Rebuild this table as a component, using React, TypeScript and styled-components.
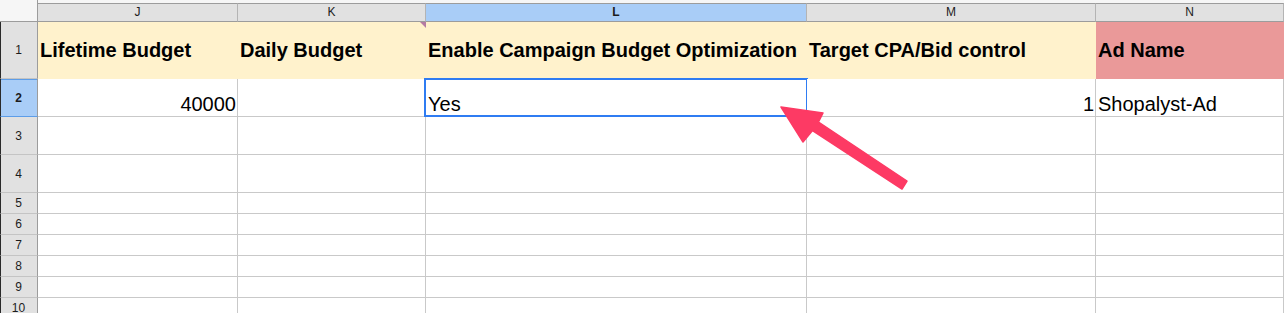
import styled, { createGlobalStyle, css } from "styled-components";

const GlobalStyle = createGlobalStyle`
  html, body {
    margin: 0;
    padding: 0;
    background: #ffffff;
    overflow: hidden;
  }
  body {
    font-family: "Liberation Sans", Arial, sans-serif;
  }
`;

const Page = styled.div`
  position: relative;
  width: 1284px;
  height: 313px;
  overflow: hidden;
`;

const Grid = styled.div`
  display: grid;
  grid-template-columns: 38px 200px 188px 381px 289px 188px;
  grid-template-rows: 22px 57px 38px 38px 38px 21px 21px 21px 21px 21px 21px;
  background: #f6f6f6;
`;

const Corner = styled.div`
  background: #f6f6f6;
  border-bottom: 1px solid #9c9c9c;
  border-right: 1px solid #9c9c9c;
  box-sizing: border-box;
`;

const ColHead = styled.div<{ $active?: boolean }>`
  margin-top: 3px;
  box-sizing: border-box;
  border-top: 1px solid #9c9c9c;
  border-bottom: 1px solid #9c9c9c;
  border-right: 1px solid #b4b4b4;
  background: ${({ $active }) => ($active ? "#a9cdf7" : "#e1e1e1")};
  display: flex;
  align-items: center;
  justify-content: center;
  font-size: 12px;
  color: #1c1c1c;
  font-weight: ${({ $active }) => ($active ? 700 : 400)};
  padding-bottom: 1px;
`;

const RowHead = styled.div<{ $active?: boolean }>`
  box-sizing: border-box;
  border-left: 1px solid #2a2a2a;
  border-right: 1px solid #9c9c9c;
  border-bottom: 1px solid ${({ $active }) => ($active ? "#5d9de8" : "#c4c4c4")};
  ${({ $active }) =>
    $active &&
    css`
      box-shadow: inset 0 1px 0 #5d9de8;
    `}
  background: ${({ $active }) => ($active ? "#a9cdf7" : "#e1e1e1")};
  display: flex;
  align-items: center;
  justify-content: center;
  font-size: 12px;
  color: #1c1c1c;
  font-weight: ${({ $active }) => ($active ? 700 : 400)};
  padding-right: 1px;
`;

const Cell = styled.div<{
  $bg?: string;
  $bold?: boolean;
  $align?: "left" | "right";
  $valign?: "center" | "end";
  $edge?: boolean;
  $note?: boolean;
  $selected?: boolean;
}>`
  position: relative;
  box-sizing: border-box;
  background: ${({ $bg }) => $bg || "#ffffff"};
  border-right: 1px solid ${({ $bg, $edge }) => ($edge ? "#c4c4c4" : $bg ? "transparent" : "#c9c9c9")};
  border-bottom: 1px solid ${({ $bg }) => ($bg ? "transparent" : "#c9c9c9")};
  display: flex;
  align-items: ${({ $valign }) => ($valign === "end" ? "flex-end" : "center")};
  justify-content: ${({ $align }) => ($align === "right" ? "flex-end" : "flex-start")};
  padding: ${({ $valign }) => ($valign === "end" ? "0 1px 0 2px" : "0 2px 0 2px")};
  font-size: 20px;
  line-height: 23px;
  font-weight: ${({ $bold }) => ($bold ? 700 : 400)};
  color: #000000;
  white-space: nowrap;
  overflow: visible;

  ${({ $note }) =>
    $note &&
    css`
      &::after {
        content: "";
        position: absolute;
        top: 0;
        right: -1px;
        width: 0;
        height: 0;
        border-top: 6px solid #b57ca3;
        border-left: 6px solid transparent;
      }
    `}

  ${({ $selected }) =>
    $selected &&
    css`
      &::before {
        content: "";
        position: absolute;
        left: -2px;
        top: -1px;
        right: -2px;
        bottom: -1px;
        border: 2px solid #2f7cf2;
        pointer-events: none;
      }
    `}
`;

const Arrow = styled.svg`
  position: absolute;
  left: 0;
  top: 0;
  pointer-events: none;
`;

const YELLOW = "#fff2cc";
const PINK = "#ea9999";

const columns = ["J", "K", "L", "M", "N"];

type RowSpec = {
  n: number;
  cells: { text?: string; align?: "left" | "right" }[];
};

const blank = () => [{}, {}, {}, {}, {}];

const lowerRows: RowSpec[] = [
  {
    n: 2,
    cells: [
      { text: "40000", align: "right" },
      {},
      { text: "Yes" },
      { text: "1", align: "right" },
      { text: "Shopalyst-Ad" },
    ],
  },
  { n: 3, cells: blank() },
  { n: 4, cells: blank() },
  { n: 5, cells: blank() },
  { n: 6, cells: blank() },
  { n: 7, cells: blank() },
  { n: 8, cells: blank() },
  { n: 9, cells: blank() },
  { n: 10, cells: blank() },
];

const headers = [
  "Lifetime Budget",
  "Daily Budget",
  "Enable Campaign Budget Optimization",
  "Target CPA/Bid control",
  "Ad Name",
];

export default function App() {
  return (
    <Page>
      <GlobalStyle />
      <Grid>
        <Corner />
        {columns.map((c) => (
          <ColHead key={c} $active={c === "L"}>
            {c}
          </ColHead>
        ))}

        <RowHead>1</RowHead>
        {headers.map((h, i) => (
          <Cell key={h} $bold $bg={i === 4 ? PINK : YELLOW} $note={i === 1}>
            {h}
          </Cell>
        ))}

        {lowerRows.map((row) => [
          <RowHead key={`h${row.n}`} $active={row.n === 2}>
            {row.n}
          </RowHead>,
          ...row.cells.map((cell, i) => (
            <Cell
              key={`${row.n}-${i}`}
              $align={cell.align}
              $valign="end"
              $edge={i === 4 && row.n <= 4}
              $selected={row.n === 2 && i === 2}
            >
              {cell.text}
            </Cell>
          )),
        ])}
      </Grid>

      <Arrow width="1284" height="313" viewBox="0 0 1284 313">
        <polygon
          points="781,107 823,113 818.5,122 907,181 902,189 812.5,130.5 803,142"
          fill="#fd3a64"
          stroke="#fd3a64"
          strokeWidth="1.5"
          strokeLinejoin="round"
        />
      </Arrow>
    </Page>
  );
}
